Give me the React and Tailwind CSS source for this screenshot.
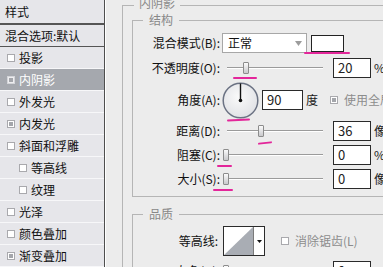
const font = "font-['Noto_Sans_CJK_SC','Microsoft_YaHei',sans-serif]"

const styles = [
  { label: '投影', on: false },
  { label: '内阴影', on: true, active: true },
  { label: '外发光', on: false },
  { label: '内发光', on: true },
  { label: '斜面和浮雕', on: false },
  { label: '等高线', on: false, indent: true },
  { label: '纹理', on: false, indent: true },
  { label: '光泽', on: false },
  { label: '颜色叠加', on: false },
  { label: '渐变叠加', on: true },
]

function Box({ on, light }) {
  return (
    <span
      className={`flex h-[8px] w-[8px] shrink-0 items-center justify-center border ${
        light ? 'border-[#d4d5d9] bg-[#eeeef0]' : 'border-[#a9a9ad] bg-white'
      }`}
    >
      {on ? <span className="h-[4px] w-[4px] bg-[#a4a6ab]" /> : null}
    </span>
  )
}

function Slider({ at }) {
  return (
    <div className="relative ml-[2px] h-[20px] w-[105px]">
      <div className="absolute left-[5px] right-[4px] top-[9px] h-[2px] border-b border-white bg-[#9b9b9b]" />
      <div
        className="absolute top-[4px] h-[12px] w-[6px] rounded-[1px] border border-[#8c8c8c] bg-gradient-to-b from-[#fbfbfb] to-[#c9c9cc]"
        style={{ left: at }}
      />
    </div>
  )
}

function Field({ value, unit, w = 'w-[38px]', ml = 'ml-[6px]' }) {
  return (
    <>
      <div
        className={`${ml} ${w} flex h-[20px] items-center border border-[#2a2a2a] bg-white pl-[4px] text-[13px] text-[#222]`}
      >
        {value}
      </div>
      {unit ? <span className="ml-[3px] text-[12px] text-[#1a1a1a]">{unit}</span> : null}
    </>
  )
}

function Row({ label, children, h = 'h-[20px]', mt = '', lw = 'w-[87px]' }) {
  return (
    <div className={`flex ${h} ${mt} items-center whitespace-nowrap`}>
      <span className={`${lw} shrink-0 text-right text-[12px] text-[#111]`}>{label}</span>
      {children}
    </div>
  )
}

function Pink({ className }) {
  return <span className={`absolute h-[2px] rounded-full bg-[#e3269a] ${className}`} />
}

export default function App() {
  return (
    <div className={`relative flex h-[267px] w-[383px] overflow-hidden bg-[#ececec] ${font}`}>
      <aside className="w-[105px] shrink-0 border-r border-[#4e4e4e] bg-[#e6e6ea] text-[12px] text-[#111]">
        <div className="flex h-[24px] items-center border-b border-[#555] pl-[5px]">样式</div>
        <div className="flex h-[23px] items-center border-b border-t border-[#555] pl-[5px]">
          混合选项:默认
        </div>
        {styles.map((item) => (
          <div
            key={item.label}
            className={`flex h-[22px] items-center gap-[4px] border-b border-[#f7f7f9] ${
              item.indent ? 'pl-[19px]' : 'pl-[7px]'
            } ${item.active ? 'bg-[#a5a8ae] text-white' : ''}`}
          >
            <Box on={item.on} light={item.active} />
            <span>{item.label}</span>
          </div>
        ))}
      </aside>

      <section className="flex-1 border-l border-white">
        <fieldset className="ml-[16px] mt-[-3px] w-[300px] border border-[#b5b5b5] pb-[20px]">
          <legend className="ml-[11px] px-[5px] pb-[4px] text-[12px] leading-[12px] text-[#8a8a8a]">内阴影</legend>

          <fieldset className="ml-[9px] w-[290px] border border-[#b5b5b5] pb-[7px]">
            <legend className="ml-[10px] px-[6px] text-[12px] leading-[14px] text-[#888]">结构</legend>

            <Row label="混合模式(B):" mt="mt-[6px]">
              <div className="ml-[2px] flex h-[20px] w-[85px] items-center justify-between border border-[#a7a7a7] bg-white pl-[5px] pr-[4px] text-[12px] text-[#111]">
                正常
                <svg width="7" height="5" viewBox="0 0 7 5">
                  <path d="M0 0H7L3.5 5Z" fill="#9c9c9c" />
                </svg>
              </div>
              <div className="ml-[4px] h-[17px] w-[33px] border border-[#222] bg-white" />
            </Row>

            <Row label="不透明度(O):" mt="mt-[5px]">
              <Slider at={21} />
              <Field value="20" unit="%" />
            </Row>

            <Row label="角度(A):" h="h-[38px]" mt="mt-[3px]">
              <svg className="ml-[2px]" width="37" height="37" viewBox="0 0 37 37">
                <defs>
                  <radialGradient id="dial" cx="45%" cy="40%" r="60%">
                    <stop offset="0%" stopColor="#fafafa" />
                    <stop offset="100%" stopColor="#e1e2e6" />
                  </radialGradient>
                </defs>
                <circle cx="18.5" cy="18.5" r="17.3" fill="url(#dial)" stroke="#6b7283" strokeWidth="1.5" />
                <line x1="18.5" y1="18.5" x2="18.5" y2="1.5" stroke="#111" strokeWidth="1.4" />
                <circle cx="18.5" cy="18.5" r="1.8" fill="#111" />
              </svg>
              <Field value="90" unit="度" w="w-[41px]" ml="ml-[3px]" />
              <span className="ml-[12px]">
                <Box on />
              </span>
              <span className="ml-[6px] text-[12px] text-[#8c8c8c]">使用全局光</span>
            </Row>

            <Row label="距离(D):" mt="mt-[2px]">
              <Slider at={36} />
              <Field value="36" unit="像素" />
            </Row>

            <Row label="阻塞(C):" mt="mt-[4px]">
              <Slider at={1} />
              <Field value="0" unit="%" />
            </Row>

            <Row label="大小(S):" mt="mt-[4px]">
              <Slider at={1} />
              <Field value="0" unit="像素" />
            </Row>
          </fieldset>

          <fieldset className="ml-[9px] mt-[10px] w-[290px] border border-[#b5b5b5] pb-[10px]">
            <legend className="ml-[10px] px-[6px] text-[12px] leading-[14px] text-[#888]">品质</legend>

            <Row label="等高线:" h="h-[30px]" mt="mt-[5px]" lw="w-[85px]">
              <div className="ml-[5px] flex h-[30px] w-[42px] border border-[#2b2b2b] bg-white">
                <svg width="29" height="28" viewBox="0 0 29 28">
                  <path d="M0 28L29 0V28Z" fill="#a9adb4" />
                </svg>
                <div className="flex flex-1 items-center justify-center border-l border-[#7a7a7a]">
                  <svg width="5" height="3" viewBox="0 0 5 3">
                    <path d="M0 0H5L2.5 3Z" fill="#111" />
                  </svg>
                </div>
              </div>
              <span className="ml-[16px]">
                <Box />
              </span>
              <span className="ml-[6px] text-[12px] text-[#8c8c8c]">消除锯齿(L)</span>
            </Row>

            <Row label="杂色(N):" mt="mt-[5px]">
              <Slider at={1} />
              <Field value="0" unit="%" />
            </Row>
          </fieldset>
        </fieldset>
      </section>

      <Pink className="left-[304px] top-[52px] w-[46px]" />
      <Pink className="left-[233px] top-[77px] w-[24px]" />
      <Pink className="left-[227px] top-[119px] w-[23px] -rotate-3" />
      <Pink className="left-[258px] top-[142px] w-[14px] -rotate-6" />
      <Pink className="left-[217px] top-[165px] w-[15px]" />
      <Pink className="left-[213px] top-[189px] w-[20px]" />
    </div>
  )
}
